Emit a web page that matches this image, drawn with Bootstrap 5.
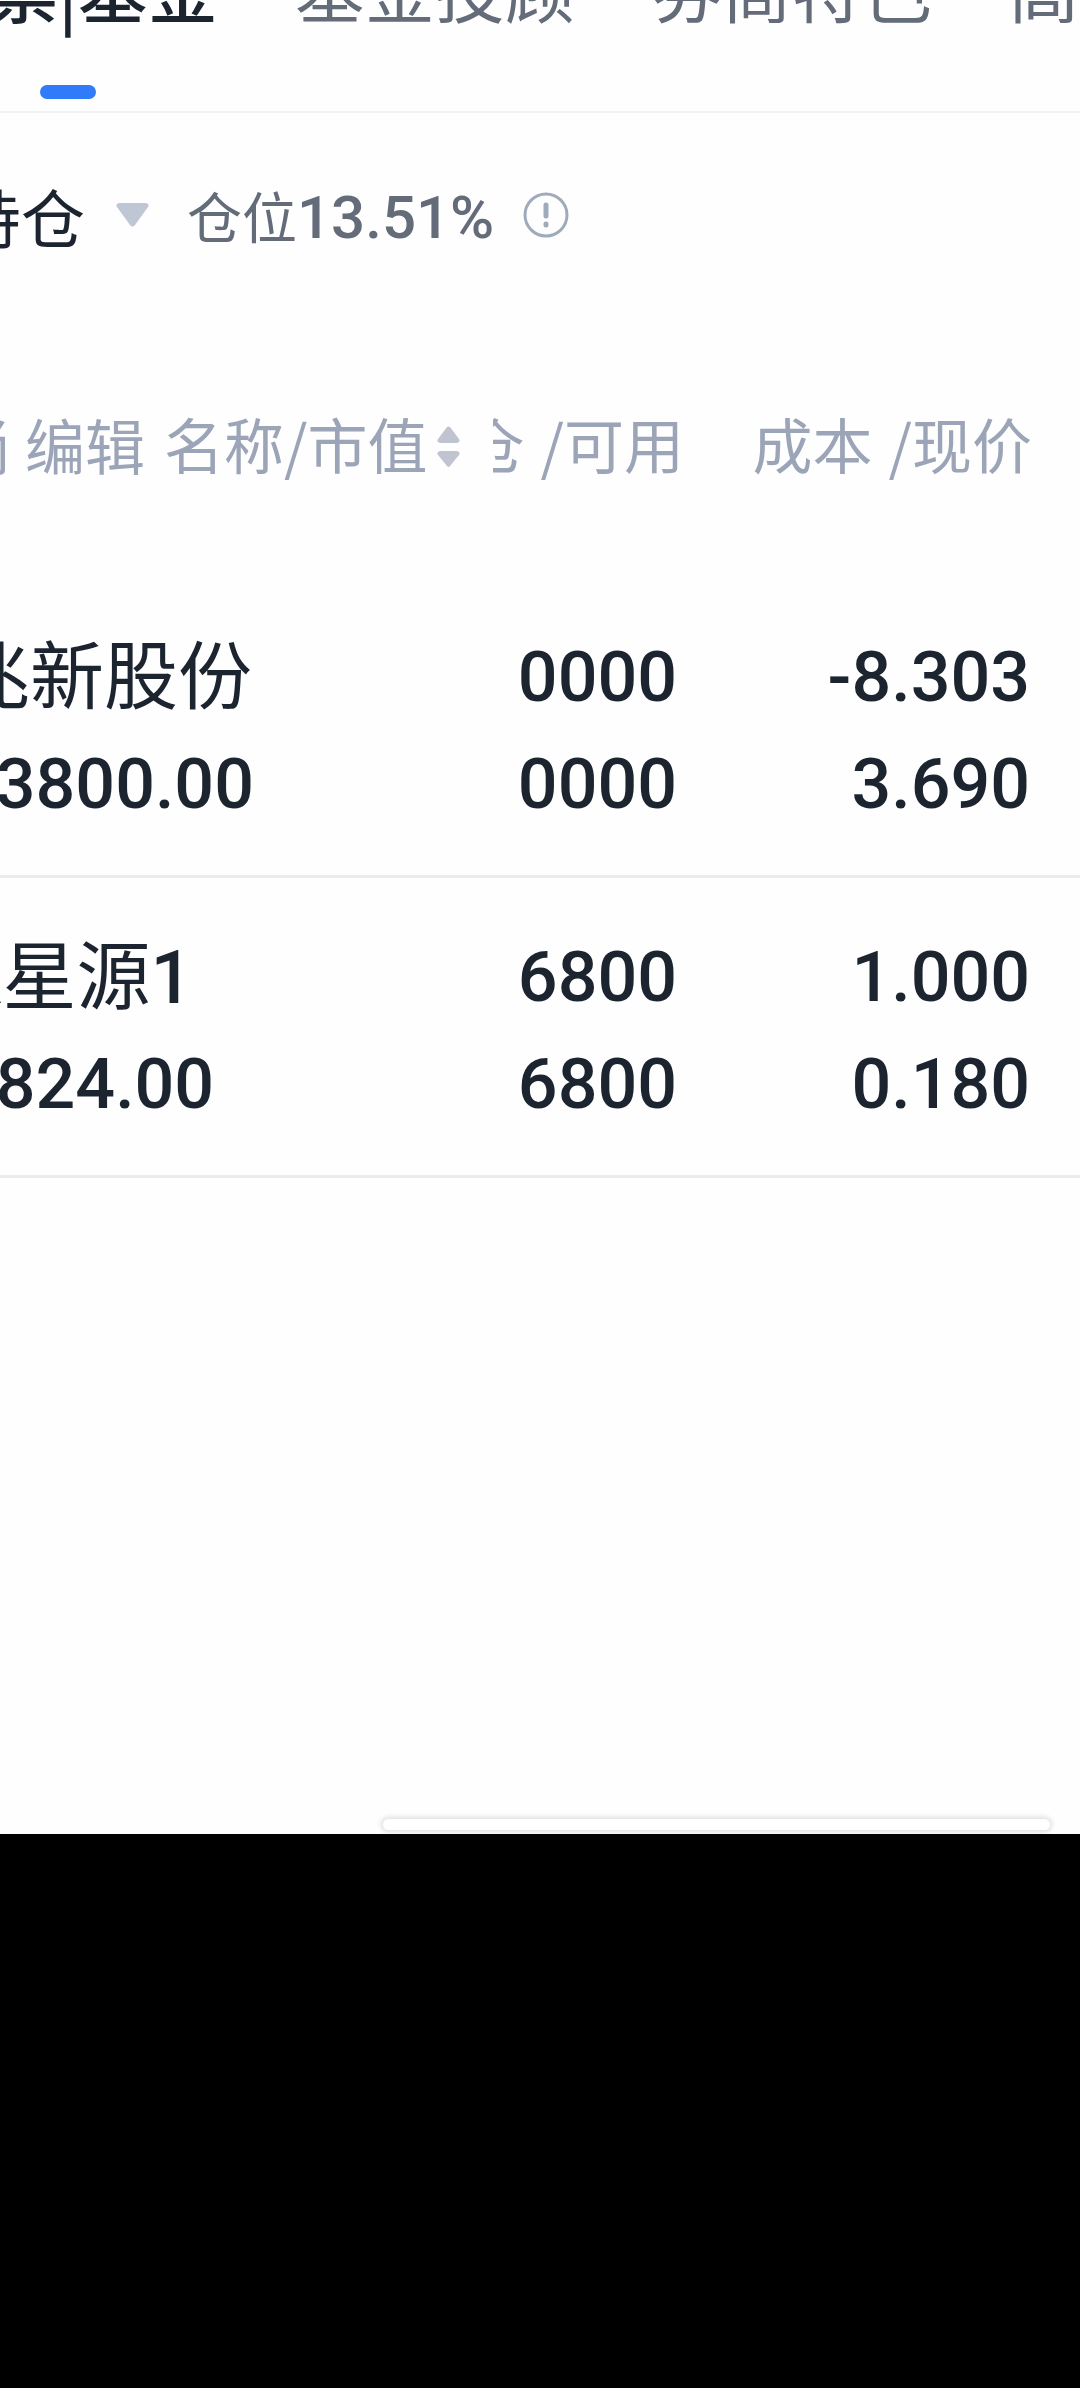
<!DOCTYPE html>
<html lang="zh-CN">
<head>
<meta charset="utf-8">
<meta name="viewport" content="width=device-width, initial-scale=1">
<title>持仓</title>
<link href="https://cdn.jsdelivr.net/npm/bootstrap@5.3.0/dist/css/bootstrap.min.css" rel="stylesheet">
<style>
body{background:#000;color:#1c2430;font-family:"Noto Sans CJK SC",sans-serif;overflow-x:hidden}
.sheet{background:#fefefe}
.num{font-family:Roboto,"Noto Sans CJK SC",sans-serif}
span.num{line-height:1}
/* tab strip, scrolled slightly left and up */
.tabs{gap:77px;margin:-54px 0 0 -82px;padding-bottom:12px}
.tabs-wrap{border-bottom:2px solid #f2f2f2}
.tab-link{font-size:70px;line-height:84px;color:#646b79;text-decoration:none}
.tab-link.active{color:#1c2430;font-weight:500}
.tab-link.active::after{content:"";display:block;width:56px;height:14px;margin:55px auto 0;border-radius:7px;background:#2f7bfa}
.summary{padding:69px 0 54px;margin-left:-43px;line-height:64px}
.pick{font-size:64px;line-height:64px;color:#1c2430;gap:31px}
.position-rate{font-size:55px;color:#646b79;margin-left:38px}
.position-rate .num{font-size:60px}
.info{margin-left:29px}
.holdings{table-layout:fixed}
.holdings th{font-size:60px;line-height:60px;font-weight:400;color:#9ca5b7;padding:109px 0 104px;overflow:hidden}
.holdings td{padding:46px 0 37px;border-bottom:3px solid #ebebeb;font-size:70px;line-height:107px;font-weight:500}
.holdings td>div{height:107px}
.col-name{width:493px}
.col-qty{width:191px}
.label-pair{gap:16px}
.holdings .head-price{padding-right:48px}
.cell-name>div{margin-left:-44px}
.cell-name>.stock{font-size:74px;line-height:94px;font-weight:400}
.stock .num{font-size:74px;font-weight:500}
.holdings .cell-qty{padding-right:7px}
.holdings .cell-price{padding-right:50px}
.head-name{margin-left:-48px}
.edit{padding-top:3px;gap:13px}
.title{margin-left:19px}
.sort{margin:8px 0 0 9px}
.tail{padding:641px 30px 4px 383px}
.pill{height:11px;border-radius:6px;background:#fff;box-shadow:0 0 5px 2px #dedede}
</style>
<script src="https://cdn.jsdelivr.net/npm/bootstrap@5.3.0/dist/js/bootstrap.bundle.min.js"></script>
</head>
<body>
<main class="sheet overflow-hidden">
  <div class="tabs-wrap overflow-hidden">
    <nav class="tabs d-flex align-items-start text-nowrap">
      <a class="tab-link active" href="#">股票|基金</a>
      <a class="tab-link" href="#">基金投顾</a>
      <a class="tab-link" href="#">券商特色</a>
      <a class="tab-link" href="#">高</a>
    </nav>
  </div>
  <div class="summary d-flex align-items-center text-nowrap">
    <button type="button" class="pick btn p-0 border-0 rounded-0 d-flex align-items-center">持仓
      <svg width="33" height="24" viewBox="0 0 33 24" aria-hidden="true"><path d="M3 0h27q4 1 2 4L19 22q-2.500 3-5 0L1 4Q-1 1 3 0z" fill="#bfc6d4"/></svg>
    </button>
    <span class="position-rate">仓位<span class="num fw-medium">13.51%</span></span>
    <button type="button" class="info btn p-0 border-0 d-flex" aria-label="说明">
      <svg width="46" height="46" viewBox="0 0 46 46" fill="none" stroke="#9fabbb"><circle cx="23" cy="23" r="21" stroke-width="3"/><path d="M23 13v11M23 32v1" stroke-width="5" stroke-linecap="round"/></svg>
    </button>
  </div>
  <table class="holdings w-100 text-nowrap">
    <thead>
      <tr>
        <th class="col-name" scope="col">
          <div class="head-name d-flex align-items-center">
            <span class="edit d-flex"><span>尚</span><span>编辑</span></span>
            <span class="title">名称/市值</span>
            <svg class="sort" width="23" height="42" viewBox="0 0 23 42" fill="#c0c4d1" aria-hidden="true"><path d="M10 1q1.500-1 3 0l9 12q2 3-2 4H3q-4-1-2-4zM3 25h17q4 1 2 4l-9 11q-1.500 2-3 0L1 29q-2-3 2-4z"/></svg>
          </div>
        </th>
        <th class="col-qty" scope="col"><div class="label-pair d-flex justify-content-end"><span>持仓</span><span>/可用</span></div></th>
        <th class="head-price" scope="col"><div class="label-pair d-flex justify-content-end"><span>成本</span><span>/现价</span></div></th>
      </tr>
    </thead>
    <tbody>
      <tr>
        <td class="cell-name"><div class="stock">兆新股份</div><div class="num">73800.00</div></td>
        <td class="cell-qty num text-end"><div>0000</div><div>0000</div></td>
        <td class="cell-price num text-end"><div>-8.303</div><div>3.690</div></td>
      </tr>
      <tr>
        <td class="cell-name"><div class="stock"><span class="num">R</span>星源<span class="num">1</span></div><div class="num">4824.00</div></td>
        <td class="cell-qty num text-end"><div>6800</div><div>6800</div></td>
        <td class="cell-price num text-end"><div>1.000</div><div>0.180</div></td>
      </tr>
    </tbody>
  </table>
  <div class="tail"><div class="pill"></div></div>
</main>
</body>
</html>
